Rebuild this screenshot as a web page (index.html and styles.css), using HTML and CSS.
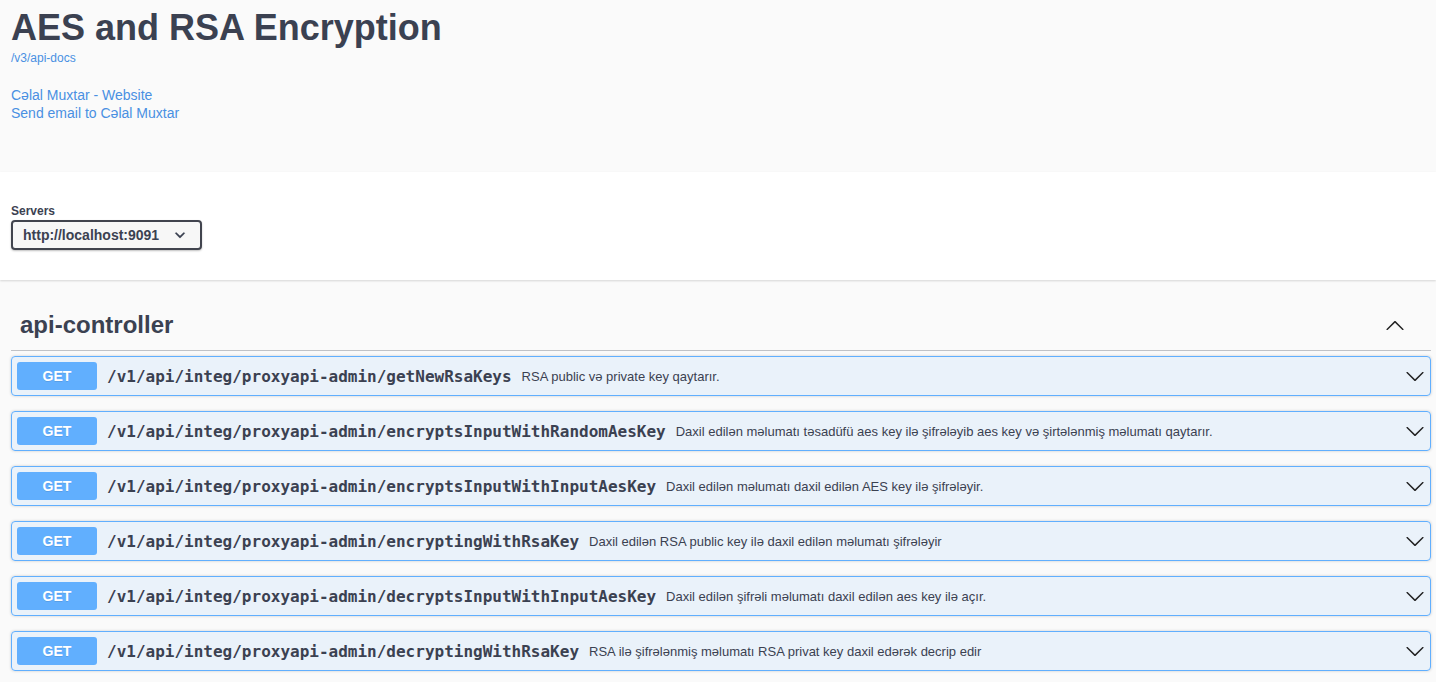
FILE: index.html
```html
<!DOCTYPE html>
<html>
<head>
<meta charset="utf-8">
<title>AES and RSA Encryption</title>
<link rel="stylesheet" href="styles.css">
</head>
<body>
<div class="info">
  <h2 class="title">AES and RSA Encryption</h2>
  <a class="url" href="#">/v3/api-docs</a>
  <div class="contact">
    <a href="#">Cəlal Muxtar - Website</a>
    <a href="#">Send email to Cəlal Muxtar</a>
  </div>
</div>

<div class="scheme-container">
  <div class="servers-title">Servers</div>
  <div class="select">
    <span>http://localhost:9091</span>
    <svg class="select-arrow" width="20" height="20" viewBox="0 0 20 20"><path d="M13.418 7.859a.695.695 0 01.978 0 .68.68 0 010 .969l-3.908 3.83a.697.697 0 01-.979 0l-3.908-3.83a.68.68 0 010-.969.695.695 0 01.978 0L10 11z" fill="#3b4151" stroke="#3b4151" stroke-width=".4"/></svg>
  </div>
</div>

<div class="section">
  <div class="tag">
    <h3 class="tag-name">api-controller</h3>
    <svg class="tag-arrow" width="20" height="20" viewBox="0 0 20 20"><path d="M17.418 14.908c.272.268.709.268.979 0s.271-.701 0-.969l-7.908-7.83c-.27-.268-.707-.268-.979 0l-7.908 7.83c-.27.268-.27.701 0 .969.271.268.709.268.979 0L10 7.767l7.418 7.141z" fill="#222"/></svg>
  </div>

  <div class="op">
    <span class="method">GET</span>
    <span class="path">/v1/api/integ/proxyapi-admin/getNewRsaKeys</span>
    <span class="desc">RSA public və private key qaytarır.</span>
    <svg class="op-arrow" width="20" height="20" viewBox="0 0 20 20"><path d="M17.418 6.109c.272-.268.709-.268.979 0s.271.701 0 .969l-7.908 7.83c-.27.268-.707.268-.979 0l-7.908-7.83c-.27-.268-.27-.701 0-.969.271-.268.709-.268.979 0L10 13.25l7.418-7.141z" fill="#222"/></svg>
  </div>

  <div class="op">
    <span class="method">GET</span>
    <span class="path">/v1/api/integ/proxyapi-admin/encryptsInputWithRandomAesKey</span>
    <span class="desc">Daxil edilən məlumatı təsadüfü aes key ilə şifrələyib aes key və şirtələnmiş məlumatı qaytarır.</span>
    <svg class="op-arrow" width="20" height="20" viewBox="0 0 20 20"><path d="M17.418 6.109c.272-.268.709-.268.979 0s.271.701 0 .969l-7.908 7.83c-.27.268-.707.268-.979 0l-7.908-7.83c-.27-.268-.27-.701 0-.969.271-.268.709-.268.979 0L10 13.25l7.418-7.141z" fill="#222"/></svg>
  </div>

  <div class="op">
    <span class="method">GET</span>
    <span class="path">/v1/api/integ/proxyapi-admin/encryptsInputWithInputAesKey</span>
    <span class="desc">Daxil edilən məlumatı daxil edilən AES key ilə şifrələyir.</span>
    <svg class="op-arrow" width="20" height="20" viewBox="0 0 20 20"><path d="M17.418 6.109c.272-.268.709-.268.979 0s.271.701 0 .969l-7.908 7.83c-.27.268-.707.268-.979 0l-7.908-7.83c-.27-.268-.27-.701 0-.969.271-.268.709-.268.979 0L10 13.25l7.418-7.141z" fill="#222"/></svg>
  </div>

  <div class="op">
    <span class="method">GET</span>
    <span class="path">/v1/api/integ/proxyapi-admin/encryptingWithRsaKey</span>
    <span class="desc">Daxil edilən RSA public key ilə daxil edilən məlumatı şifrələyir</span>
    <svg class="op-arrow" width="20" height="20" viewBox="0 0 20 20"><path d="M17.418 6.109c.272-.268.709-.268.979 0s.271.701 0 .969l-7.908 7.83c-.27.268-.707.268-.979 0l-7.908-7.83c-.27-.268-.27-.701 0-.969.271-.268.709-.268.979 0L10 13.25l7.418-7.141z" fill="#222"/></svg>
  </div>

  <div class="op">
    <span class="method">GET</span>
    <span class="path">/v1/api/integ/proxyapi-admin/decryptsInputWithInputAesKey</span>
    <span class="desc">Daxil edilən şifrəli məlumatı daxil edilən aes key ilə açır.</span>
    <svg class="op-arrow" width="20" height="20" viewBox="0 0 20 20"><path d="M17.418 6.109c.272-.268.709-.268.979 0s.271.701 0 .969l-7.908 7.83c-.27.268-.707.268-.979 0l-7.908-7.830c-.27-.268-.27-.701 0-.969.271-.268.709-.268.979 0L10 13.25l7.418-7.141z" fill="#222"/></svg>
  </div>

  <div class="op">
    <span class="method">GET</span>
    <span class="path">/v1/api/integ/proxyapi-admin/decryptingWithRsaKey</span>
    <span class="desc">RSA ilə şifrələnmiş məlumatı RSA privat key daxil edərək decrip edir</span>
    <svg class="op-arrow" width="20" height="20" viewBox="0 0 20 20"><path d="M17.418 6.109c.272-.268.709-.268.979 0s.271.701 0 .969l-7.908 7.83c-.27.268-.707.268-.979 0l-7.908-7.83c-.27-.268-.27-.701 0-.969.271-.268.709-.268.979 0L10 13.25l7.418-7.141z" fill="#222"/></svg>
  </div>
</div>
</body>
</html>
```

FILE: styles.css
```css
html, body {
  margin: 0;
  padding: 0;
}
body {
  background: #fafafa;
  font-family: "Liberation Sans", Arial, sans-serif;
  color: #3b4151;
}
a {
  color: #4990e2;
  text-decoration: none;
}

.info {
  padding: 7px 5px 50px 11px;
}
.title {
  margin: 0;
  font-size: 36px;
  line-height: 41px;
  font-weight: 700;
  color: #3b4151;
}
.url {
  display: block;
  margin-top: 3px;
  font-size: 12px;
  line-height: 14px;
}
.contact {
  margin-top: 21px;
  display: flex;
  flex-direction: column;
  align-items: flex-start;
  font-size: 14px;
  line-height: 18px;
}

.scheme-container {
  background: #fff;
  box-shadow: 0 1px 2px 0 rgba(0, 0, 0, .15);
  padding: 31px 5px 30px 11px;
}
.servers-title {
  font-size: 12px;
  line-height: 17px;
  font-weight: 700;
  color: #3b4151;
}
.select {
  box-sizing: border-box;
  width: 191px;
  height: 30px;
  display: flex;
  align-items: center;
  padding: 0 10px 0 10px;
  border: 2px solid #41444e;
  border-radius: 4px;
  background: #f7f7f7;
  box-shadow: 0 1px 2px 0 rgba(0, 0, 0, .25);
  font-size: 14px;
  font-weight: 700;
  color: #3b4151;
}
.select-arrow {
  margin-left: auto;
  flex: none;
}

.section {
  padding: 21px 5px 0 11px;
}
.tag {
  display: flex;
  align-items: center;
  padding: 9px 26px 11px 9px;
  border-bottom: 1px solid rgba(59, 65, 81, .3);
  margin-bottom: 5px;
}
.tag-name {
  margin: 0;
  font-size: 24px;
  line-height: 29px;
  font-weight: 700;
  color: #3b4151;
}
.tag-arrow {
  margin-left: auto;
  flex: none;
}

.op {
  box-sizing: border-box;
  height: 40px;
  display: flex;
  align-items: center;
  padding: 5px;
  margin-bottom: 15px;
  border: 1px solid #61affe;
  border-radius: 4px;
  background: rgba(97, 175, 254, .1);
  box-shadow: 0 0 3px rgba(0, 0, 0, .19);
}
.method {
  flex: none;
  width: 80px;
  height: 28px;
  display: flex;
  align-items: center;
  justify-content: center;
  background: #61affe;
  border-radius: 3px;
  color: #fff;
  font-size: 14px;
  font-weight: 700;
  text-shadow: 0 1px 0 rgba(0, 0, 0, .1);
}
.path {
  padding: 0 10px;
  font-family: "DejaVu Sans Mono", monospace;
  font-size: 16px;
  font-weight: 700;
  color: #3b4151;
}
.desc {
  font-size: 13px;
  color: #3b4151;
}
.op-arrow {
  margin-left: auto;
  flex: none;
}
```
